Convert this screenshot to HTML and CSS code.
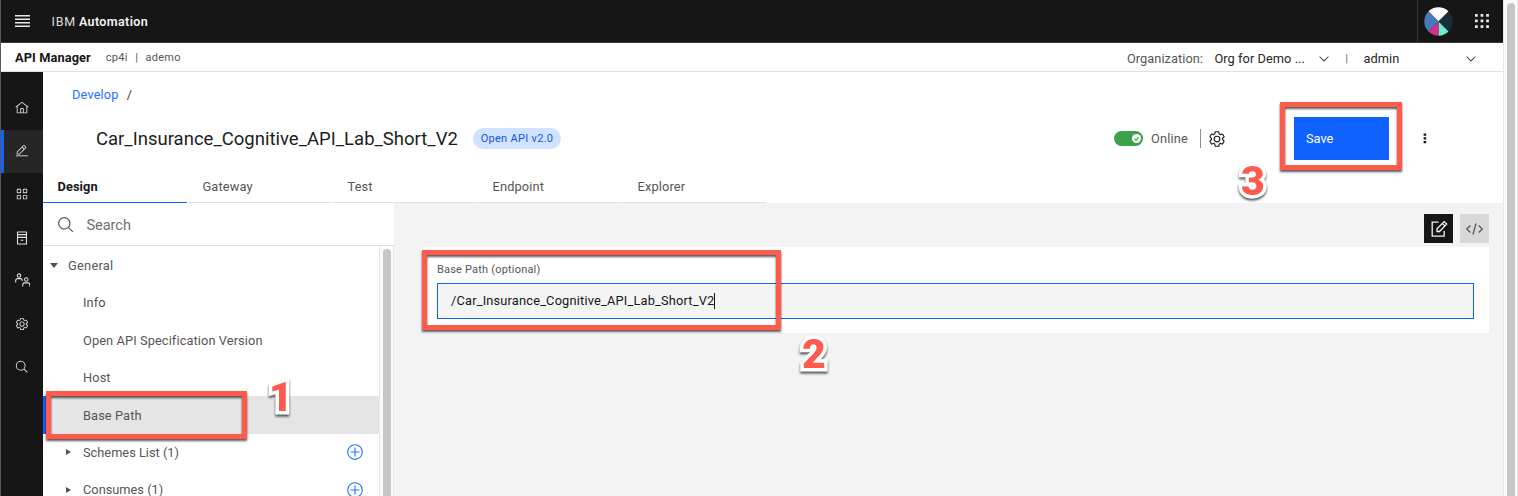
FILE: index.html
```
<!DOCTYPE html>
<html lang="en">
<head>
<meta charset="utf-8">
<title>API Manager</title>
<link rel="stylesheet" href="styles.css">
</head>
<body>
<div class="window">
  <div class="app">
    <header class="topbar">
      <svg class="menu-icon" width="15" height="12" viewBox="0 0 15 12" fill="#e8e8e8"><path d="M0 0h15v1.4H0zM0 3.5h15v1.4H0zM0 7h15v1.4H0zM0 10.5h15v1.4H0z"/></svg>
      <span class="brand"><span class="brand-ibm">IBM</span> <b>Automation</b></span>
      <div class="topbar-right">
        <svg class="avatar" width="29" height="29" viewBox="-14.5 -14.5 29 29">
          <clipPath id="disc"><circle r="14.2"/></clipPath>
          <g clip-path="url(#disc)">
            <path fill="#fff" d="M0 0L-16-16H16z"/>
            <path fill="#1a2c37" d="M0 0L16-16V16z"/>
            <path fill="#6eead3" d="M0 0L16 16H0z"/>
            <path fill="#dc2e86" d="M0 0V16H-16z"/>
            <path fill="#4879bd" d="M0 0L-16 16V-16z"/>
          </g>
        </svg>
        <svg class="switcher" width="14" height="14" viewBox="0 0 14 14" fill="#e8e8e8"><path d="M0 0h2.7v2.7H0zM5.6 0h2.7v2.7H5.6zM11.2 0h2.7v2.7h-2.7zM0 5.6h2.7v2.7H0zM5.6 5.6h2.7v2.7H5.6zM11.2 5.6h2.7v2.7h-2.7zM0 11.2h2.7v2.7H0zM5.6 11.2h2.7v2.7H5.6zM11.2 11.2h2.7v2.7h-2.7z"/></svg>
      </div>
    </header>

    <div class="subbar">
      <b class="product">API Manager</b>
      <span class="crumbs"><span>cp4i</span><span>|</span><span>ademo</span></span>
      <div class="context">
        <span class="context-label">Organization:</span>
        <span class="context-org">Org for Demo ...</span>
        <svg class="chevron" width="14" height="14" viewBox="0 0 32 32"><path d="M16 22L5 11l1.5-1.5L16 19l9.500-9.500L27 11z"/></svg>
        <span class="context-sep">|</span>
        <span class="context-user">admin</span>
        <svg class="chevron" width="14" height="14" viewBox="0 0 32 32"><path d="M16 22L5 11l1.500-1.500L16 19l9.500-9.500L27 11z"/></svg>
      </div>
    </div>

    <div class="body">
      <nav class="rail">
        <a class="rail-item"><svg viewBox="0 0 32 32"><path d="M16.6123,2.2138a1.01,1.01,0,0,0-1.2427,0L1,13.4194l1.2427,1.5717L4,13.6208V26a2.0041,2.0041,0,0,0,2,2H26a2.0037,2.0037,0,0,0,2-2V13.63L29.7573,15,31,13.4282ZM18,26H14V18h4Zm2,0V18a2.0023,2.0023,0,0,0-2-2H14a2.002,2.002,0,0,0-2,2v8H6V12.0615l10-7.79,10,7.8005V26Z"/></svg></a>
        <a class="rail-item active"><svg viewBox="0 0 32 32"><path d="M2 26H30V28H2z"/><path d="M25.4,9c0.8-0.8,0.8-2,0-2.8l-3.600-3.600c-0.800-0.800-2-0.800-2.800,0l-15,15V24h6.400L25.400,9z M20.400,4L24,7.600l-3,3L17.400,7L20.400,4z M6,22v-3.600l10-10l3.600,3.600l-10,10H6z"/></svg></a>
        <a class="rail-item"><svg viewBox="0 0 32 32"><path d="M12 4H6A2 2 0 0 0 4 6v6a2 2 0 0 0 2 2h6a2 2 0 0 0 2-2V6A2 2 0 0 0 12 4Zm0 8H6V6h6ZM26 4H20a2 2 0 0 0-2 2v6a2 2 0 0 0 2 2h6a2 2 0 0 0 2-2V6A2 2 0 0 0 26 4Zm0 8H20V6h6ZM12 18H6a2 2 0 0 0-2 2v6a2 2 0 0 0 2 2h6a2 2 0 0 0 2-2V20A2 2 0 0 0 12 18Zm0 8H6V20h6ZM26 18H20a2 2 0 0 0-2 2v6a2 2 0 0 0 2 2h6a2 2 0 0 0 2-2V20A2 2 0 0 0 26 18Zm0 8H20V20h6Z"/></svg></a>
        <a class="rail-item"><svg viewBox="0 0 32 32"><path d="M26 1H6A1.500 1.500 0 0 0 4.500 2.500V29.500A1.500 1.500 0 0 0 6 31H26a1.500 1.500 0 0 0 1.500-1.500V2.500A1.500 1.500 0 0 0 26 1ZM25 3.500V7H7V3.500ZM25 9.500V13H7V9.500ZM7 28.500V16H25V28.500ZM13 20h6v2.500h-6z"/></svg></a>
        <a class="rail-item"><svg viewBox="0 0 32 32" class="users"><g fill="none" stroke="#e0e0e0" stroke-width="2.300"><circle cx="8.500" cy="5.500" r="3.700"/><path d="M1.500 20v-4a4 4 0 0 1 4-4h6a4 4 0 0 1 4 4v1"/><circle cx="24" cy="14" r="3.700"/><path d="M16.500 29v-4a4 4 0 0 1 4-4h7a4 4 0 0 1 4 4v4"/></g></svg></a>
        <a class="rail-item"><svg viewBox="0 0 32 32"><path id="gear" d="M27,16.76c0-.25,0-.5,0-.76s0-.51,0-.77l1.920-1.680A2,2,0,0,0,29.300,11L26.940,7a2,2,0,0,0-1.730-1,2,2,0,0,0-.640.100l-2.430.820a11.350,11.350,0,0,0-1.310-.750l-.510-2.520a2,2,0,0,0-2-1.610H13.640a2,2,0,0,0-2,1.610l-.510,2.520a11.480,11.480,0,0,0-1.320.750L7.430,6.060A2,2,0,0,0,6.790,6,2,2,0,0,0,5.060,7L2.700,11a2,2,0,0,0,.410,2.510L5,15.240c0,.250,0,.500,0,.760s0,.510,0,.770L3.110,18.450A2,2,0,0,0,2.700,21L5.060,25a2,2,0,0,0,1.730,1,2,2,0,0,0,.640-.100l2.430-.820a11.350,11.350,0,0,0,1.310.750l.510,2.520a2,2,0,0,0,2,1.610h4.720a2,2,0,0,0,2-1.610l.510-2.520a11.480,11.480,0,0,0,1.320-.750l2.420.820a2,2,0,0,0,.640.100,2,2,0,0,0,1.730-1L29.300,21a2,2,0,0,0-.410-2.510ZM25.210,24l-3.430-1.160a8.860,8.860,0,0,1-2.710,1.570L18.360,28H13.640l-.710-3.550a9.360,9.360,0,0,1-2.700-1.570L6.790,24,4.430,20l2.720-2.400a8.900,8.900,0,0,1,0-3.130L4.430,12,6.790,8l3.430,1.160a8.860,8.860,0,0,1,2.710-1.570L13.640,4h4.720l.710,3.550a9.360,9.360,0,0,1,2.700,1.570L25.210,8,27.570,12l-2.720,2.400a8.900,8.900,0,0,1,0,3.130L27.570,20ZM16,22a6,6,0,1,1,6-6A5.940,5.940,0,0,1,16,22Zm0-10a3.910,3.910,0,0,0-4,4,3.910,3.910,0,0,0,4,4,3.910,3.910,0,0,0,4-4A3.910,3.910,0,0,0,16,12Z"/></svg></a>
        <a class="rail-item"><svg viewBox="0 0 32 32"><path id="lens" d="M29,27.5859l-7.5521-7.5521a11.0177,11.0177,0,1,0-1.4141,1.4141L27.5859,29ZM4,13a9,9,0,1,1,9,9A9.01,9.01,0,0,1,4,13Z"/></svg></a>
      </nav>

      <main class="page">
        <div class="breadcrumb"><a>Develop</a><span>/</span></div>
        <div class="title-row">
          <h1>Car_Insurance_Cognitive_API_Lab_Short_V2</h1>
          <span class="tag">Open API v2.0</span>
          <div class="actions">
            <span class="toggle"><svg width="9" height="9" viewBox="0 0 9 9"><circle cx="4.500" cy="4.500" r="4.500" fill="#fff"/><path d="M2.500 4.700l1.400 1.400 2.600-2.800" fill="none" stroke="#3aa24a" stroke-width="1.200"/></svg></span>
            <span class="online">Online</span>
            <span class="divider"></span>
            <svg class="gear" width="18" height="18" viewBox="0 0 32 32"><use href="#gear"/></svg>
            <button class="save">Save</button>
            <svg class="overflow" width="4" height="12" viewBox="0 0 4 12"><path d="M.6.500h2.600v2.200H.6zM.6 4.300h2.600v2.200H.6zM.6 8.100h2.600v2.200H.6z"/></svg>
          </div>
        </div>
        <div class="tabs">
          <a class="tab selected">Design</a><a class="tab">Gateway</a><a class="tab">Test</a><a class="tab">Endpoint</a><a class="tab">Explorer</a>
        </div>

        <div class="workspace">
          <aside class="side">
            <div class="search"><svg width="18" height="18" viewBox="0 0 32 32"><use href="#lens"/></svg><span>Search</span></div>
            <div class="tree-wrap">
              <div class="tree">
                <div class="row root"><i class="caret down"></i><span>General</span></div>
                <div class="row">Info</div>
                <div class="row">Open API Specification Version</div>
                <div class="row">Host</div>
                <div class="row current">Base Path</div>
                <div class="row group"><i class="caret"></i><span>Schemes List (1)</span><svg class="add" viewBox="0 0 32 32"><path d="M16,4A12,12,0,1,1,4,16,12,12,0,0,1,16,4m0-2A14,14,0,1,0,30,16,14,14,0,0,0,16,2Z"/><path d="M24 15H17V8H15V15H8V17H15V24H17V17H24z"/></svg></div>
                <div class="row group"><i class="caret"></i><span>Consumes (1)</span><svg class="add" viewBox="0 0 32 32"><path d="M16,4A12,12,0,1,1,4,16,12,12,0,0,1,16,4m0-2A14,14,0,1,0,30,16,14,14,0,0,0,16,2Z"/><path d="M24 15H17V8H15V15H8V17H15V24H17V17H24z"/></svg></div>
              </div>
              <div class="scrollbar"><div class="thumb"></div></div>
            </div>
          </aside>

          <section class="editor">
            <div class="modes">
              <span class="mode on"><svg width="18" height="18" viewBox="0 0 18 18" fill="none" stroke="#f4f4f4" stroke-width="1.300"><path d="M8.500 2.200H2.200v14h12V11"/><path d="M7 11.500V8.800L14.200 1.600l2.500 2.500L9.500 11.500zM12.400 3.400l2.600 2.600"/></svg></span>
              <span class="mode"><svg width="19" height="14" viewBox="0 0 19 14" fill="none" stroke="#5c5c5c" stroke-width="1.400"><path d="M5.300 3.500L1.800 7l3.500 3.500M13.700 3.500L17.200 7l-3.500 3.500M11 1.500L8 12.500"/></svg></span>
            </div>
            <div class="panel">
              <label>Base Path (optional)</label>
              <div class="field"><span>/Car_Insurance_Cognitive_API_Lab_Short_V2</span><i class="cursor"></i></div>
            </div>
          </section>
        </div>
      </main>
    </div>
  </div>
  <div class="scrollbar page-scroll"><div class="thumb"></div></div>
</div>

<div class="mark mark-1"></div>
<div class="mark mark-2"></div>
<div class="mark mark-3"></div>
<span class="num num-1">1</span>
<span class="num num-2">2</span>
<span class="num num-3">3</span>
</body>
</html>
```
FILE: styles.css
```
* { box-sizing: border-box; }
html, body { margin: 0; height: 496px; overflow: hidden; }
body {
  position: relative;
  font: 12.8px/18px Roboto, "Noto Sans", sans-serif;
  letter-spacing: .1px;
  color: #565656;
  background: #fff;
}
svg { display: block; flex: none; }
i { display: block; flex: none; }
span, a, b { white-space: nowrap; }

.window { display: flex; height: 496px; }
.app { width: 1503px; display: flex; flex-direction: column; border-left: 1px solid #5a5a5a; }

/* Header */
.topbar { flex: none; height: 43px; display: flex; align-items: center; background: #161616; border-bottom: 1px solid #393939; padding-left: 13.500px; color: #f4f4f4; }
.brand { margin-left: 22px; padding-top: 2px; font-size: 12.500px; letter-spacing: .36px; word-spacing: -.5px; }
.brand b { font-weight: 600; }
.brand-ibm { letter-spacing: .8px; color: #dedede; }
.topbar-right { margin-left: auto; width: 86px; height: 43px; display: flex; align-items: center; border-left: 1px solid #393939; padding-left: 6px; }
.switcher { margin-left: 22px; }

.subbar { flex: none; height: 29px; display: flex; align-items: center; border-bottom: 1px solid #e0e0e0; padding: 2px 0 0 14px; }
.product { color: #161616; }
.crumbs { display: flex; gap: 7.500px; margin-left: 15px; font-size: 11px; letter-spacing: .25px; }
.context { margin-left: auto; display: flex; align-items: center; padding: 1px 25.500px 0 0; letter-spacing: .05px; }
.context-org { margin-left: 11.500px; width: 102px; color: #262626; }
.context-sep { margin-left: 15px; width: 18px; font-size: 10px; }
.context-user { width: 100px; color: #262626; }
.chevron { fill: #393939; }

.body { flex: 1; min-height: 0; display: flex; }

/* Left rail */
.rail { flex: none; width: 42px; background: #161616; padding-top: 14.500px; }
.rail-item { height: 43.200px; display: flex; align-items: center; justify-content: center; }
.rail-item.active { background: #262626; border-left: 3px solid #0f62fe; padding-right: 3px; }
.rail-item svg { width: 14px; height: 14px; fill: #e0e0e0; }
.rail-item .users { width: 15px; height: 15px; }

/* Page */
.page { flex: 1; min-width: 0; display: flex; flex-direction: column; }
.breadcrumb { display: flex; gap: 8px; padding: 14px 0 0 29px; color: #393939; }
.breadcrumb a { color: #2a70fe; letter-spacing: .15px; }
.title-row { height: 43px; margin-top: 13px; padding-left: 53px; display: flex; align-items: center; }
h1 { margin: 0; width: 362px; font-size: 18.500px; line-height: 26px; font-weight: 400; letter-spacing: 0; color: #1c1c1c; white-space: nowrap; }
.tag { margin-left: 15px; height: 21px; width: 88px; border-radius: 11px; background: #d0e2ff; color: #1955dc; font-size: 11px; line-height: 21px; letter-spacing: .3px; text-align: center; }
.actions { margin-left: auto; display: flex; align-items: center; padding-right: 76px; }
.toggle { width: 29px; height: 15px; border-radius: 8px; background: #3aa24a; display: flex; align-items: center; justify-content: flex-end; padding-right: 2px; }
.online { width: 49px; margin-left: 8px; letter-spacing: .18px; }
.divider { width: 1px; height: 19px; background: #8d8d8d; }
.gear { margin-left: 7px; fill: #161616; }
.save { margin: 0 34px 0 68px; width: 95px; height: 43px; border: 0; background: #0f62fe; color: #fff; font: inherit; text-align: left; padding: 0 0 0 12px; }
.overflow { fill: #161616; }

.tabs { display: flex; gap: 1px; margin-top: 11px; }
.tab { width: 144px; height: 32px; padding: 7px 0 0 14.500px; border-bottom: 1px solid #e0e0e0; letter-spacing: .15px; }
.tab.selected { border-bottom-color: #0f62fe; font-weight: 700; color: #161616; letter-spacing: .1px; }

.workspace { flex: 1; min-height: 0; display: flex; }

/* Navigator */
.side { flex: none; width: 351px; display: flex; flex-direction: column; }
.search { flex: none; height: 43px; display: flex; align-items: center; gap: 12px; padding: 2px 0 0 13.500px; border-bottom: 1px solid #e0e0e0; font-size: 14.500px; letter-spacing: -.03px; color: #6f6f6f; }
.search span { padding-top: 1px; }
.search svg { fill: #525252; }
.tree-wrap { flex: 1; min-height: 0; display: flex; overflow: hidden; }
.tree { flex: 1; }
.row { height: 37.500px; display: flex; align-items: center; padding: 2px 0 0 40px; }
.row.root { padding-left: 7px; letter-spacing: .28px; }
.row.root span { margin-left: 10px; }
.row.current { background: #e5e5e5; border-left: 3px solid #0f62fe; padding-left: 37px; }
.row.group { padding-top: 0; padding-left: 23px; letter-spacing: 0; }
.row.group span { margin-left: 12px; padding-top: 1px; }
.caret { width: 0; height: 0; border: 3.500px solid transparent; border-left: 5px solid #525252; border-right: 0; }
.caret.down { border: 4px solid transparent; border-top: 5px solid #525252; border-bottom: 0; }
.add { width: 18px; height: 18px; margin-left: auto; margin-right: 15px; fill: #2a70fe; }

.scrollbar { flex: none; width: 15px; background: #fafafa; border: solid #e8e8e8; border-width: 0 1px; padding: 3px 2.500px 0 3px; }
.thumb { height: 600px; border-radius: 4px 4px 0 0; background: #c6c6c6; }
.page-scroll { height: 496px; overflow: hidden; }

/* Editor */
.editor { flex: 1; min-width: 0; background: #f3f3f3; padding: 11px 14px 0 29px; }
.modes { display: flex; justify-content: flex-end; gap: 7px; }
.mode { width: 29px; height: 29px; display: flex; align-items: center; justify-content: center; background: #d8d8d8; }
.mode.on { background: #161616; }
.panel { margin-top: 4px; height: 86px; background: #fff; padding: 14px 15px 0 14px; }
.panel label { display: block; height: 22px; font-size: 11px; letter-spacing: .19px; }
.field { height: 36px; display: flex; align-items: center; border: 1px solid #0f62fe; background: #f4f4f4; padding-left: 13px; color: #161616; letter-spacing: .19px; }
.cursor { width: 1px; height: 16px; background: #161616; }

/* Callouts laid over the page */
.mark { position: absolute; border: 5px solid #ff5a4b; filter: drop-shadow(0 2px 1px rgba(0, 0, 0, .65)); }
.mark-1 { left: 46px; top: 391px; width: 201px; height: 48px; }
.mark-2 { left: 422px; top: 250px; width: 359px; height: 80px; }
.mark-3 { left: 1280px; top: 102px; width: 122px; height: 68px; }
.num { position: absolute; font: 900 41px/44px Roboto, sans-serif; letter-spacing: 0; color: #ff5a4b; -webkit-text-stroke: 7px #fff; paint-order: stroke fill; filter: drop-shadow(0 2px 1px rgba(0, 0, 0, .65)); }
.num-1 { left: 269px; top: 375px; }
.num-2 { left: 802px; top: 332px; }
.num-3 { left: 1241px; top: 159px; }
```
